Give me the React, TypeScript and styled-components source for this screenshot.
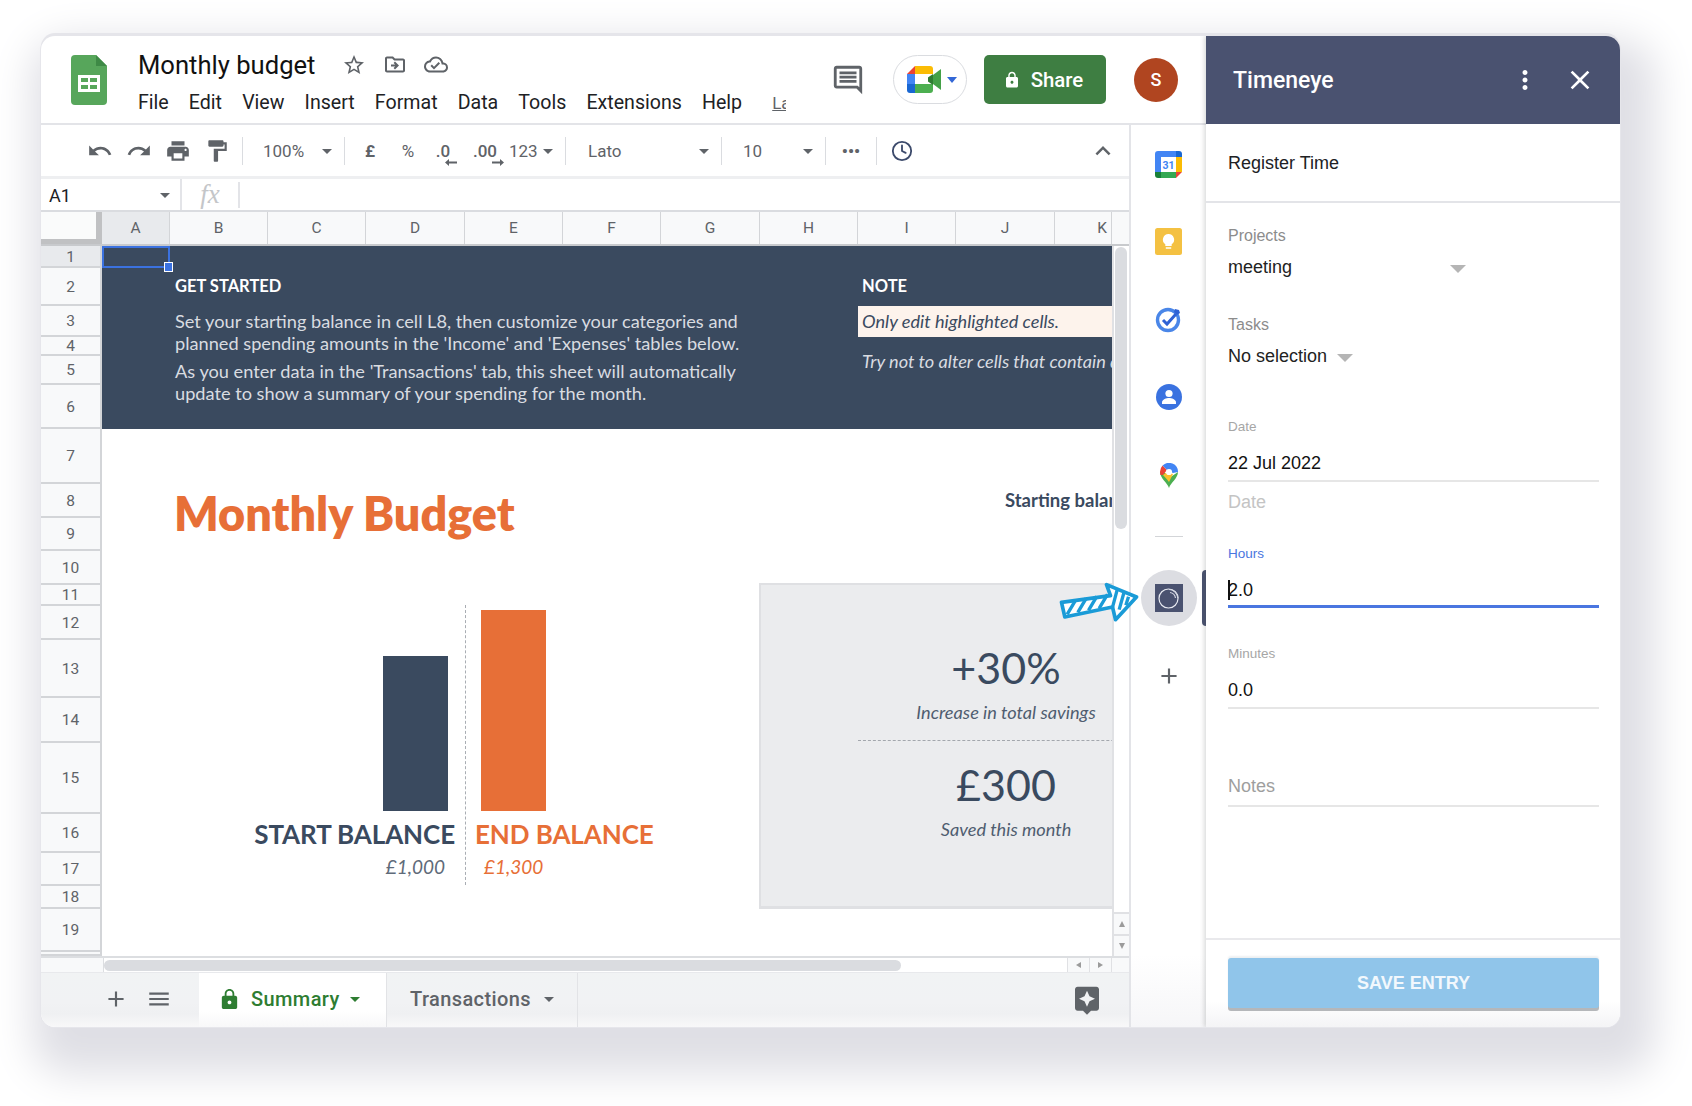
import React from 'react';
import styled, { createGlobalStyle } from 'styled-components';
import {
  MdUndo, MdRedo, MdPrint, MdFormatPaint, MdStarBorder, MdOutlineDriveFileMove, MdOutlineCloudDone,
  MdOutlineComment, MdLock, MdAdd, MdMenu, MdClose, MdMoreVert, MdExpandLess, MdAssistant,
} from 'react-icons/md';
import { Clock } from 'lucide-react';

const GlobalStyle = createGlobalStyle`
  html, body {
    margin: 0;
    height: 1106px;
    overflow: hidden;
    background: #fff;
  }
  * { box-sizing: border-box; }
`;

const ROW_HEIGHTS = [22, 38, 31, 19, 29, 44, 55, 34, 33, 34, 21, 34, 58, 45, 71, 39, 33, 23, 43, 4];
const COLUMNS: [string, number][] = [
  ['A', 68], ['B', 98], ['C', 98], ['D', 99], ['E', 98], ['F', 98], ['G', 99], ['H', 98], ['I', 98], ['J', 99], ['K', 57],
];
const MENU = ['File', 'Edit', 'View', 'Insert', 'Format', 'Data', 'Tools', 'Extensions', 'Help'];

const Page = styled.div`
  padding: 36px 0 0 41px;
`;

const Window = styled.div`
  width: 1579px;
  height: 991px;
  display: flex;
  border-radius: 14px;
  overflow: hidden;
  background: #fff;
  box-shadow: 0 -3px 0 0 #e5e5ea, 0 0 0 1px #e6e6eb, 13px 25px 40px 22px #dfdfe5;
  font-family: Roboto, sans-serif;
`;

const Workspace = styled.div`
  width: 1165px;
  display: flex;
  flex-direction: column;
`;

const TopBar = styled.div`
  height: 89px;
  display: flex;
  align-items: center;
  padding: 0 28px 0 30px;
  border-bottom: 2px solid #e3e4e8;
  flex-shrink: 0;
`;

const DocTitleBlock = styled.div`
  margin-left: 31px;
  display: flex;
  flex-direction: column;
  padding-top: 7px;
`;

const TitleRow = styled.div`
  height: 36px;
  display: flex;
  align-items: center;
  gap: 17px;
`;

const DocTitle = styled.span`
  font-size: 25.6px;
  color: #111;
  width: 176px;
  margin-right: 11px;
  white-space: nowrap;
`;

const TitleIcon = styled.span`
  width: 24px;
  height: 24px;
  display: flex;
  align-items: center;
  justify-content: center;
  color: #5f6368;
`;

const MenuRow = styled.div`
  margin-top: 3px;
  height: 34px;
  display: flex;
  align-items: center;
  gap: 20.1px;
`;

const MenuItem = styled.span`
  font-size: 19.6px;
  color: #202124;
`;

const LastEdit = styled.span`
  width: 14px;
  margin-left: 10px;
  overflow: hidden;
  white-space: nowrap;
  font-size: 17px;
  color: #5f6368;
  text-decoration: underline;
`;

const TopActions = styled.div`
  margin-left: auto;
  display: flex;
  align-items: center;
`;

const CommentButton = styled.span`
  display: flex;
  color: #5f6368;
  margin-right: 28px;
`;

const MeetPill = styled.div`
  width: 74px;
  height: 49px;
  border: 1.5px solid #dadce0;
  border-radius: 25px;
  display: flex;
  align-items: center;
  padding-left: 13px;
  gap: 6px;
  margin-right: 17px;
`;

const MeetCaret = styled.span`
  width: 0;
  height: 0;
  border-left: 5.5px solid transparent;
  border-right: 5.5px solid transparent;
  border-top: 6px solid #3367d6;
`;

const ShareButton = styled.div`
  width: 122px;
  height: 49px;
  border-radius: 5px;
  background: #3e7e42;
  color: #fff;
  font-size: 20.4px;
  font-weight: 500;
  display: flex;
  align-items: center;
  justify-content: center;
  gap: 10px;
  padding-right: 4px;
  margin-right: 28px;
`;

const Avatar = styled.div`
  width: 44px;
  height: 44px;
  border-radius: 50%;
  background: #b04520;
  color: #fff;
  font-size: 18px;
  font-weight: 500;
  display: flex;
  align-items: center;
  justify-content: center;
`;

const MainRow = styled.div`
  position: relative;
  flex: 1;
  display: flex;
  min-height: 0;
`;

const SheetArea = styled.div`
  width: 1088px;
  display: flex;
  flex-direction: column;
`;

const Toolbar = styled.div`
  height: 54px;
  display: flex;
  align-items: center;
  padding: 1px 0 0 39px;
  border-bottom: 3px solid #eeeff1;
  color: #5f6368;
  font-size: 17px;
  flex-shrink: 0;
`;

const ToolSlot = styled.span<{ $w: number }>`
  width: ${(p) => p.$w}px;
  display: flex;
  align-items: center;
  justify-content: center;
  color: #5f6368;
`;

const ToolSep = styled.span<{ $ml?: number }>`
  width: 1px;
  height: 28px;
  background: #dadce0;
  margin-left: ${(p) => p.$ml || 0}px;
`;

const ToolSelect = styled.span<{ $w: number; $pl: number }>`
  width: ${(p) => p.$w}px;
  padding: 0 12px 0 ${(p) => p.$pl}px;
  display: flex;
  align-items: center;
  justify-content: space-between;
  white-space: nowrap;
`;

const Caret = styled.span<{ $size?: number; $color?: string }>`
  width: 0;
  height: 0;
  flex-shrink: 0;
  border-left: ${(p) => p.$size || 5}px solid transparent;
  border-right: ${(p) => p.$size || 5}px solid transparent;
  border-top: ${(p) => p.$size || 5}px solid ${(p) => p.$color || '#5f6368'};
`;

const Decimal = styled.span`
  position: relative;
  font-weight: 500;
  font-size: 17px;
  line-height: 20px;
`;

const DecimalArrow = styled.svg`
  position: absolute;
  top: 18px;
  right: -7px;
  fill: #5f6368;
`;

const Collapse = styled.span`
  margin-left: auto;
  margin-right: 11px;
  display: flex;
  color: #5f6368;
`;

const FormulaBar = styled.div`
  height: 33px;
  display: flex;
  align-items: center;
  border-bottom: 2px solid #dadce0;
  flex-shrink: 0;
`;

const NameBox = styled.div`
  width: 141px;
  height: 100%;
  display: flex;
  align-items: center;
  justify-content: space-between;
  padding: 2px 10px 0 8px;
  border-right: 2px solid #e3e4e8;
  font-size: 18px;
  color: #202124;
`;

const FxLabel = styled.div`
  width: 58px;
  height: 26px;
  display: flex;
  align-items: center;
  justify-content: center;
  border-right: 2px solid #e3e4e8;
  font-family: 'Liberation Serif', serif;
  font-style: italic;
  font-size: 27px;
  color: #c4c6c9;
`;

const ColumnHeader = styled.div`
  height: 34px;
  display: flex;
  background: #f8f9fa;
  border-bottom: 2px solid #c8cacd;
  flex-shrink: 0;
`;

const CornerCell = styled.div`
  width: 61px;
  background: #fafbfb;
  border-right: 6px solid #c0c1c3;
  border-bottom: 5px solid #c0c1c3;
`;

const ColumnCell = styled.div<{ $w: number; $active?: boolean; $clipped?: boolean }>`
  width: ${(p) => p.$w}px;
  display: flex;
  align-items: center;
  justify-content: ${(p) => (p.$clipped ? 'flex-end' : 'center')};
  padding-right: ${(p) => (p.$clipped ? 4 : 0)}px;
  font-size: 15.5px;
  color: #5f6368;
  background: ${(p) => (p.$active ? '#e8eaed' : 'transparent')};
  border-right: 1.5px solid #d3d5d8;
`;

const GridRow = styled.div`
  height: 710px;
  display: flex;
  flex-shrink: 0;
`;

const RowHeaders = styled.div`
  width: 61px;
  display: flex;
  flex-direction: column;
  border-right: 2px solid #d3d5d8;
`;

const RowCell = styled.div<{ $h: number; $active?: boolean }>`
  height: ${(p) => p.$h}px;
  display: flex;
  align-items: center;
  justify-content: center;
  padding-top: 1px;
  font-size: 15.5px;
  color: #5f6368;
  background: ${(p) => (p.$active ? '#e8eaed' : '#f8f9fa')};
  border-bottom: 2px solid #d3d5d8;
`;

const Cells = styled.div`
  width: 1010px;
  display: flex;
  flex-direction: column;
  overflow: hidden;
  font-family: Lato, sans-serif;
`;

const Banner = styled.div`
  position: relative;
  height: 183px;
  display: grid;
  grid-template-columns: 756px 254px;
  background: #3a4a5f;
  flex-shrink: 0;
`;

const SelectedCell = styled.div`
  position: absolute;
  left: 0;
  top: 0;
  width: 68px;
  height: 22px;
  border: 2px solid #3b72e0;
`;

const SelectionHandle = styled.span`
  position: absolute;
  right: -5px;
  bottom: -6px;
  width: 9px;
  height: 10px;
  background: #3b72e0;
  border: 1px solid #fff;
`;

const BannerLeft = styled.div`
  padding: 29px 0 0 73px;
`;

const BannerHeading = styled.div`
  font-weight: 700;
  font-size: 16.5px;
  line-height: 22px;
  color: #fff;
`;

const BannerText = styled.p<{ $mt: number }>`
  margin: ${(p) => p.$mt}px 0 0;
  font-size: 18.2px;
  line-height: 22px;
  color: #d9dce1;
  white-space: nowrap;
`;

const BannerRight = styled.div`
  padding-top: 29px;
  overflow: hidden;
`;

const NoteHeading = styled(BannerHeading)`
  padding-left: 4px;
`;

const NoteHighlight = styled.div`
  margin-top: 9px;
  height: 31px;
  padding: 0 0 2px 4px;
  display: flex;
  align-items: center;
  background: #fdf3ec;
  font-style: italic;
  font-size: 18.2px;
  color: #3a4a5f;
`;

const NoteText = styled.div`
  margin-top: 13px;
  padding-left: 4px;
  font-style: italic;
  font-size: 18.2px;
  line-height: 22px;
  color: #d9dce1;
  white-space: nowrap;
`;

const Lower = styled.div`
  flex: 1;
  display: grid;
  grid-template-columns: 657px 353px;
  min-height: 0;
`;

const LowerLeft = styled.div`
  display: flex;
  flex-direction: column;
`;

const BudgetTitle = styled.h1`
  margin: 53px 0 0 72px;
  font-family: Lato, sans-serif;
  font-weight: 800;
  font-size: 46.7px;
  line-height: 62px;
  color: #e76f37;
  white-space: nowrap;
`;

const Chart = styled.div`
  margin-top: 61px;
  height: 280px;
  display: grid;
  grid-template-columns: 363px 1fr;
`;

const ChartColumn = styled.div<{ $right?: boolean }>`
  display: flex;
  flex-direction: column;
  justify-content: flex-end;
  align-items: ${(p) => (p.$right ? 'flex-start' : 'flex-end')};
  padding-bottom: 2px;
  ${(p) => (p.$right ? 'border-left: 1px dashed #a9adb3;' : '')}
`;

const Bar = styled.div<{ $h: number; $color: string; $right?: boolean }>`
  width: 65px;
  height: ${(p) => p.$h}px;
  background: ${(p) => p.$color};
  margin: ${(p) => (p.$right ? '0 0 0 15px' : '0 17px 0 0')};
`;

const BarLabel = styled.div<{ $color: string; $right?: boolean }>`
  margin: ${(p) => (p.$right ? '7px 0 0 9px' : '7px 10px 0 0')};
  font-weight: 700;
  font-size: 26px;
  line-height: 32px;
  letter-spacing: -0.1px;
  color: ${(p) => p.$color};
  white-space: nowrap;
`;

const BarAmount = styled.div<{ $color: string; $right?: boolean }>`
  margin: ${(p) => (p.$right ? '1px 0 0 18px' : '1px 20px 0 0')};
  font-style: italic;
  font-size: 19px;
  line-height: 32px;
  color: ${(p) => p.$color};
`;

const LowerRight = styled.div`
  display: flex;
  flex-direction: column;
  overflow: hidden;
`;

const StartingBalance = styled.div`
  margin: 60px 0 0 246px;
  font-weight: 700;
  font-size: 18.5px;
  line-height: 22px;
  color: #3a4a5f;
  white-space: nowrap;
`;

const StatCard = styled.div`
  margin-top: 72px;
  height: 326px;
  display: flex;
  flex-direction: column;
  background: #ebecee;
  border-left: 2px solid #dfe0e3;
  border-top: 2px solid #dfe0e3;
  border-bottom: 3px solid #dfe0e3;
`;

const StatBlock = styled.div<{ $h: number; $pt: number; $line?: boolean }>`
  height: ${(p) => p.$h}px;
  padding-top: ${(p) => p.$pt}px;
  margin-left: 97px;
  width: 296px;
  text-align: center;
  ${(p) => (p.$line ? 'border-bottom: 1px dashed #a3a7ad;' : '')}
`;

const StatValue = styled.div`
  font-size: 43px;
  line-height: 52px;
  color: #3a4a5f;
`;

const StatCaption = styled.div`
  margin-top: 6px;
  font-style: italic;
  font-size: 18.2px;
  line-height: 24px;
  color: #4f5d70;
`;

const VScroll = styled.div`
  width: 17px;
  display: flex;
  flex-direction: column;
  border-left: 2px solid #e0e1e4;
  padding: 1px 2px 0 1px;
`;

const VThumb = styled.div`
  height: 282px;
  border-radius: 6px;
  background: #dadce0;
`;

const ScrollButton = styled.div<{ $first?: boolean }>`
  height: 22px;
  margin: ${(p) => (p.$first ? 'auto -2px 0 -1px' : '0 -2px 0 -1px')};
  display: flex;
  align-items: center;
  justify-content: center;
  border-top: 2px solid #e0e1e4;
  background: #f8f9fa;
`;

const Triangle = styled.span<{ $dir: 'up' | 'down' | 'left' | 'right' }>`
  width: 0;
  height: 0;
  ${(p) => (p.$dir === 'up' ? 'border-left: 3.5px solid transparent; border-right: 3.5px solid transparent; border-bottom: 6px solid #9b9b9b;' : '')}
  ${(p) => (p.$dir === 'down' ? 'border-left: 3.5px solid transparent; border-right: 3.5px solid transparent; border-top: 6px solid #9b9b9b;' : '')}
  ${(p) => (p.$dir === 'left' ? 'border-top: 3.5px solid transparent; border-bottom: 3.5px solid transparent; border-right: 5px solid #9b9b9b;' : '')}
  ${(p) => (p.$dir === 'right' ? 'border-top: 3.5px solid transparent; border-bottom: 3.5px solid transparent; border-left: 5px solid #9b9b9b;' : '')}
`;

const HScroll = styled.div`
  height: 17px;
  display: flex;
  align-items: center;
  background: #fff;
  border-top: 2px solid #dcdee1;
  border-bottom: 1px solid #e8e9ec;
  flex-shrink: 0;
`;

const HCorner = styled.div`
  width: 63px;
  height: 100%;
  background: #f8f9fa;
  border-right: 1px solid #dcdee1;
`;

const HThumb = styled.div`
  width: 797px;
  height: 11px;
  border-radius: 6px;
  background: #dadce0;
`;

const HButton = styled.div<{ $first?: boolean }>`
  width: 22px;
  height: 100%;
  display: flex;
  align-items: center;
  justify-content: center;
  background: #f8f9fa;
  border-left: 1px solid #e0e1e4;
  margin-left: ${(p) => (p.$first ? 'auto' : '0')};
`;

const HEnd = styled.div`
  width: 18px;
  height: 100%;
  background: #f8f9fa;
  border-left: 1px solid #e0e1e4;
`;

const TabBar = styled.div`
  flex: 1;
  display: flex;
  align-items: stretch;
  padding-left: 61px;
  background: linear-gradient(#f1f3f4 0%, #f1f2f4 55%, #eff0f2 75%, #f8f8f9 100%);
`;

const TabIcon = styled.span<{ $mr: number }>`
  width: 28px;
  display: flex;
  align-items: center;
  justify-content: center;
  color: #5f6368;
  padding-bottom: 2px;
  margin-right: ${(p) => p.$mr}px;
`;

const SheetTab = styled.div<{ $active?: boolean; $w: number }>`
  width: ${(p) => p.$w}px;
  display: flex;
  align-items: center;
  padding: 0 0 2px ${(p) => (p.$active ? 19 : 23)}px;
  gap: ${(p) => (p.$active ? 10 : 13)}px;
  font-size: 20px;
  letter-spacing: 0.4px;
  font-weight: 500;
  color: ${(p) => (p.$active ? '#2e7d32' : '#5f6368')};
  background: ${(p) => (p.$active ? 'linear-gradient(#fff 70%, #f8f8f9)' : 'transparent')};
  border-right: 1px solid #e2e3e6;
`;

const ExploreButton = styled.span`
  margin-left: auto;
  margin-right: 26px;
  display: flex;
  align-items: center;
  color: #5f6368;
`;

const SidePanel = styled.div`
  position: relative;
  width: 77px;
  display: flex;
  flex-direction: column;
  align-items: center;
  border-left: 2px solid #e3e4e8;
  padding-top: 19px;
  background: linear-gradient(#fff 92%, #f6f6f8);
`;

const SideIcon = styled.div`
  width: 40px;
  height: 40px;
  margin-bottom: 37.75px;
  display: flex;
  align-items: center;
  justify-content: center;
`;

const SideDivider = styled.div`
  width: 28px;
  height: 1px;
  background: #d3d5d8;
  margin-top: 3px;
`;

const ActiveAddon = styled.div`
  margin-top: 33px;
  width: 56px;
  height: 56px;
  border-radius: 50%;
  background: #dcdde2;
  display: flex;
  align-items: center;
  justify-content: center;
`;

const ActiveMarker = styled.div`
  position: absolute;
  right: 0;
  top: 445px;
  width: 4px;
  height: 56px;
  border-radius: 4px 0 0 4px;
  background: #4a5270;
`;

const PlusButton = styled.div`
  margin-top: 37px;
  display: flex;
  color: #5f6368;
`;

const PointerArrow = styled.svg`
  position: absolute;
  left: 1016px;
  top: 457px;
`;

const AddonPanel = styled.div`
  width: 414px;
  display: flex;
  flex-direction: column;
  box-shadow: -2px 0 4px rgba(60, 64, 67, 0.18);
  z-index: 1;
  font-family: 'Liberation Sans', Arial, sans-serif;
`;

const PanelHeader = styled.div`
  height: 88px;
  display: flex;
  align-items: center;
  padding: 0 24px 0 27px;
  background: #4a5270;
  color: #fff;
  flex-shrink: 0;
`;

const PanelTitle = styled.span`
  flex: 1;
  font-family: Roboto, sans-serif;
  font-weight: 500;
  font-size: 23px;
`;

const PanelAction = styled.span<{ $mr?: number }>`
  display: flex;
  margin-right: ${(p) => p.$mr || 0}px;
`;

const RegisterRow = styled.div`
  height: 79px;
  display: flex;
  align-items: center;
  padding: 2px 0 0 22px;
  font-size: 18px;
  color: #202124;
  border-bottom: 2px solid #e3e4e8;
  flex-shrink: 0;
`;

const Form = styled.div`
  padding: 0 21px 0 22px;
`;

const SelectLabel = styled.div<{ $mt: number }>`
  margin-top: ${(p) => p.$mt}px;
  font-size: 16px;
  line-height: 22px;
  color: #8c8c8c;
`;

const SelectValue = styled.div<{ $wide?: boolean }>`
  margin-top: 8px;
  width: ${(p) => (p.$wide ? '238px' : 'auto')};
  display: flex;
  align-items: center;
  gap: 10px;
  font-size: 18px;
  line-height: 24px;
  color: #222;
`;

const SelectCaret = styled(Caret)<{ $push?: boolean }>`
  margin: 4px 0 0 ${(p) => (p.$push ? 'auto' : '0')};
`;

const SmallLabel = styled.div<{ $mt: number; $active?: boolean }>`
  margin-top: ${(p) => p.$mt}px;
  font-size: 13.5px;
  line-height: 18px;
  color: ${(p) => (p.$active ? '#4a76e0' : '#a6a6a6')};
`;

const InputLine = styled.div<{ $mt: number; $pb: number; $active?: boolean; $placeholder?: boolean }>`
  position: relative;
  margin-top: ${(p) => p.$mt}px;
  padding-bottom: ${(p) => p.$pb}px;
  font-size: 18px;
  line-height: 24px;
  color: ${(p) => (p.$placeholder ? '#9e9e9e' : '#111')};
  border-bottom: ${(p) => (p.$active ? '3px solid #4a76e0' : '2px solid #e6e6e6')};
`;

const Placeholder = styled.div`
  margin-top: 8px;
  font-size: 18px;
  line-height: 24px;
  color: #c4c4c4;
`;

const TextCursor = styled.span`
  position: absolute;
  left: 0;
  top: 2px;
  width: 1.5px;
  height: 20px;
  background: #111;
`;

const PanelFooter = styled.div`
  margin-top: auto;
  height: 89px;
  padding: 18px 21px 0 22px;
  border-top: 2px solid #e9e9ec;
  background: linear-gradient(#fff 70%, #f4f4f6);
`;

const SaveButton = styled.div`
  height: 50px;
  display: flex;
  align-items: center;
  justify-content: center;
  border-radius: 3px;
  background: #90c5ea;
  box-shadow: 0 3px 0 #b5b7ba, 0 -2px 2px #eef0f2;
  color: #f2f8fd;
  font-weight: 700;
  font-size: 18px;
`;

const SheetsLogo = () => (
  <svg width="36" height="50" viewBox="0 0 36 50">
    <path d="M4 0h21l11 11v35a4 4 0 0 1-4 4H4a4 4 0 0 1-4-4V4a4 4 0 0 1 4-4z" fill="#57a65b" />
    <path d="M25 0l11 11H25z" fill="#3e8a46" />
    <path d="M7 20h22v17H7z" fill="#fff" />
    <path d="M10 23h7v4h-7zM19 23h7v4h-7zM10 30h7v4h-7zM19 30h7v4h-7z" fill="#57a65b" />
  </svg>
);

const MeetLogo = () => (
  <svg width="34" height="27" viewBox="0 0 34 27">
    <path d="M0 8L8 0v8z" fill="#ea4335" />
    <path d="M8 0h15a3 3 0 0 1 3 3v5H8z" fill="#fbbc04" />
    <path d="M0 8h8v10H0z" fill="#4285f4" />
    <path d="M0 18h8v9H3a3 3 0 0 1-3-3z" fill="#1967d2" />
    <path d="M8 18h18v6a3 3 0 0 1-3 3H8z" fill="#4caf50" />
    <path d="M26 9l8-6v21l-8-6z" fill="#43a047" />
    <path d="M18 13.5L26 8v11z" fill="#2e7d32" />
    <path d="M8 8h13v10H8z" fill="#fff" />
  </svg>
);

const CalendarIcon = () => (
  <svg width="27" height="27" viewBox="0 0 27 27">
    <path d="M3 0h18v6H6v15H0V3a3 3 0 0 1 3-3z" fill="#4285f4" />
    <path d="M21 0h3a3 3 0 0 1 3 3v3h-6z" fill="#1967d2" />
    <path d="M21 6h6v15h-6z" fill="#fbbc04" />
    <path d="M6 21h15v6H6z" fill="#34a853" />
    <path d="M0 21h6v6H3a3 3 0 0 1-3-3z" fill="#188038" />
    <path d="M21 21h6l-6 6z" fill="#ea4335" />
    <path d="M6 6h15v15H6z" fill="#fff" />
    <text x="13.5" y="18" textAnchor="middle" fontFamily="Roboto, sans-serif" fontSize="10.5" fontWeight="700" fill="#4285f4">31</text>
  </svg>
);

const KeepIcon = () => (
  <svg width="27" height="27" viewBox="0 0 27 27">
    <rect width="27" height="27" rx="2.5" fill="#f4c142" />
    <path d="M13.5 6a5.6 5.6 0 0 0-3.2 10.2V18h6.4v-1.8A5.6 5.6 0 0 0 13.5 6z" fill="#fff" />
    <path d="M10.8 19.2h5.4v1.6h-5.4z" fill="#fff" />
  </svg>
);

const TasksIcon = () => (
  <svg width="27" height="27" viewBox="0 0 27 27">
    <circle cx="13" cy="14" r="10.5" fill="none" stroke="#4a86e8" strokeWidth="3.4" />
    <path d="M8 14l4 4 9-10" fill="none" stroke="#2f62d5" strokeWidth="3" />
    <path d="M20 3l4 1 1 3-3 2-3-3z" fill="#2f62d5" />
  </svg>
);

const ContactsIcon = () => (
  <svg width="26" height="26" viewBox="0 0 26 26">
    <circle cx="13" cy="13" r="13" fill="#3a72e0" />
    <circle cx="13" cy="9.5" r="3.6" fill="#fff" />
    <path d="M6 18.5c0-3 4.5-4.4 7-4.4s7 1.4 7 4.4V20H6z" fill="#fff" />
  </svg>
);

const MapsIcon = () => (
  <svg width="18" height="25" viewBox="0 0 18 25">
    <path d="M9 25C7.5 20 0 15 0 9l5 1 4 5 9-6c0 6-7.500 11-9 16z" fill="#4caf50" />
    <path d="M0 9a9 9 0 0 1 2.600-6.400L7 7 3 12 .5 12z" fill="#ea4335" />
    <path d="M2.600 2.600A9 9 0 0 1 18 9l-5 1-6-3z" fill="#4285f4" />
    <path d="M3 12l4-3 6 2-4 8c-1.500-2.500-4-4.500-6-7z" fill="#fbc02d" />
    <circle cx="9" cy="9" r="3.100" fill="#fff" />
  </svg>
);

const TimeneyeIcon = () => (
  <svg width="28" height="28" viewBox="0 0 28 28">
    <rect width="28" height="28" fill="#4a5270" />
    <circle cx="13.500" cy="14.500" r="9.500" fill="none" stroke="#e9ebf2" strokeWidth="1.200" />
    <path d="M14 5.500a9 9 0 0 1 9 8.500" fill="none" stroke="#d4d7e2" strokeWidth="1.200" />
    <path d="M15 8.500a6.500 6.500 0 0 1 5.500 5.500" fill="none" stroke="#d4d7e2" strokeWidth="1.200" />
  </svg>
);

const App: React.FC = () => {
  return (
    <Page>
      <GlobalStyle />
      <Window>
        <Workspace>
          <TopBar>
            <SheetsLogo />
            <DocTitleBlock>
              <TitleRow>
                <DocTitle>Monthly budget</DocTitle>
                <TitleIcon><MdStarBorder size={26} /></TitleIcon>
                <TitleIcon><MdOutlineDriveFileMove size={25} /></TitleIcon>
                <TitleIcon><MdOutlineCloudDone size={25} /></TitleIcon>
              </TitleRow>
              <MenuRow>
                {MENU.map((item) => (
                  <MenuItem key={item}>{item}</MenuItem>
                ))}
                <LastEdit>Last edit was seconds ago</LastEdit>
              </MenuRow>
            </DocTitleBlock>
            <TopActions>
              <CommentButton><MdOutlineComment size={34} /></CommentButton>
              <MeetPill>
                <MeetLogo />
                <MeetCaret />
              </MeetPill>
              <ShareButton>
                <MdLock size={18} />
                Share
              </ShareButton>
              <Avatar>S</Avatar>
            </TopActions>
          </TopBar>
          <MainRow>
            <SheetArea>
              <Toolbar>
                <ToolSlot $w={39}><MdUndo size={26} /></ToolSlot>
                <ToolSlot $w={39}><MdRedo size={26} /></ToolSlot>
                <ToolSlot $w={39}><MdPrint size={26} /></ToolSlot>
                <ToolSlot $w={39}><MdFormatPaint size={26} /></ToolSlot>
                <ToolSep $ml={6} />
                <ToolSelect $w={101} $pl={20}>100% <Caret /></ToolSelect>
                <ToolSep />
                <ToolSlot $w={50}><strong>£</strong></ToolSlot>
                <ToolSlot $w={26}>%</ToolSlot>
                <ToolSlot $w={44}>
                  <Decimal>
                    .0
                    <DecimalArrow width="12" height="7" viewBox="0 0 12 7"><path d="M0 3.500L4 0v2.500h8v2H4V7z" /></DecimalArrow>
                  </Decimal>
                </ToolSlot>
                <ToolSlot $w={40}>
                  <Decimal>
                    .00
                    <DecimalArrow width="12" height="7" viewBox="0 0 12 7"><path d="M12 3.500L8 0v2.500H0v2h8V7z" /></DecimalArrow>
                  </Decimal>
                </ToolSlot>
                <ToolSelect $w={60} $pl={4}>123 <Caret /></ToolSelect>
                <ToolSep />
                <ToolSelect $w={155} $pl={22}>Lato <Caret /></ToolSelect>
                <ToolSep />
                <ToolSelect $w={103} $pl={21}>10 <Caret /></ToolSelect>
                <ToolSep />
                <ToolSlot $w={50}><strong>•••</strong></ToolSlot>
                <ToolSep />
                <ToolSlot $w={49}><Clock size={22} color="#3c4a6b" /></ToolSlot>
                <Collapse><MdExpandLess size={30} /></Collapse>
              </Toolbar>
              <FormulaBar>
                <NameBox>A1 <Caret /></NameBox>
                <FxLabel>fx</FxLabel>
              </FormulaBar>
              <ColumnHeader>
                <CornerCell />
                {COLUMNS.map(([name, width], i) => (
                  <ColumnCell key={name} $w={width} $active={i === 0} $clipped={name === 'K'}>{name}</ColumnCell>
                ))}
              </ColumnHeader>
              <GridRow>
                <RowHeaders>
                  {ROW_HEIGHTS.map((h, i) => (
                    <RowCell key={i} $h={h} $active={i === 0}>{h > 10 ? i + 1 : ''}</RowCell>
                  ))}
                </RowHeaders>
                <Cells>
                  <Banner>
                    <SelectedCell><SelectionHandle /></SelectedCell>
                    <BannerLeft>
                      <BannerHeading>GET STARTED</BannerHeading>
                      <BannerText $mt={13}>
                        Set your starting balance in cell L8, then customize your categories and<br />
                        planned spending amounts in the 'Income' and 'Expenses' tables below.
                      </BannerText>
                      <BannerText $mt={6}>
                        As you enter data in the 'Transactions' tab, this sheet will automatically<br />
                        update to show a summary of your spending for the month.
                      </BannerText>
                    </BannerLeft>
                    <BannerRight>
                      <NoteHeading>NOTE</NoteHeading>
                      <NoteHighlight>Only edit highlighted cells.</NoteHighlight>
                      <NoteText>Try not to alter cells that contain data.</NoteText>
                    </BannerRight>
                  </Banner>
                  <Lower>
                    <LowerLeft>
                      <BudgetTitle>Monthly Budget</BudgetTitle>
                      <Chart>
                        <ChartColumn>
                          <Bar $h={155} $color="#3a4a5f" />
                          <BarLabel $color="#3a4a5f">START BALANCE</BarLabel>
                          <BarAmount $color="#5f6b7a">£1,000</BarAmount>
                        </ChartColumn>
                        <ChartColumn $right>
                          <Bar $h={201} $color="#e76f37" $right />
                          <BarLabel $color="#e76f37" $right>END BALANCE</BarLabel>
                          <BarAmount $color="#e76f37" $right>£1,300</BarAmount>
                        </ChartColumn>
                      </Chart>
                    </LowerLeft>
                    <LowerRight>
                      <StartingBalance>Starting balance</StartingBalance>
                      <StatCard>
                        <StatBlock $h={156} $pt={57} $line>
                          <StatValue>+30%</StatValue>
                          <StatCaption>Increase in total savings</StatCaption>
                        </StatBlock>
                        <StatBlock $h={165} $pt={18}>
                          <StatValue>£300</StatValue>
                          <StatCaption>Saved this month</StatCaption>
                        </StatBlock>
                      </StatCard>
                    </LowerRight>
                  </Lower>
                </Cells>
                <VScroll>
                  <VThumb />
                  <ScrollButton $first><Triangle $dir="up" /></ScrollButton>
                  <ScrollButton><Triangle $dir="down" /></ScrollButton>
                </VScroll>
              </GridRow>
              <HScroll>
                <HCorner />
                <HThumb />
                <HButton $first><Triangle $dir="left" /></HButton>
                <HButton><Triangle $dir="right" /></HButton>
                <HEnd />
              </HScroll>
              <TabBar>
                <TabIcon $mr={15}><MdAdd size={26} /></TabIcon>
                <TabIcon $mr={26}><MdMenu size={26} /></TabIcon>
                <SheetTab $active $w={188}>
                  <MdLock size={23} />
                  Summary
                  <Caret $color="#2e7d32" />
                </SheetTab>
                <SheetTab $w={191}>
                  Transactions
                  <Caret />
                </SheetTab>
                <ExploreButton><MdAssistant size={32} /></ExploreButton>
              </TabBar>
            </SheetArea>
            <SidePanel>
              <SideIcon><CalendarIcon /></SideIcon>
              <SideIcon><KeepIcon /></SideIcon>
              <SideIcon><TasksIcon /></SideIcon>
              <SideIcon><ContactsIcon /></SideIcon>
              <SideIcon><MapsIcon /></SideIcon>
              <SideDivider />
              <ActiveAddon><TimeneyeIcon /></ActiveAddon>
              <PlusButton><MdAdd size={26} /></PlusButton>
              <ActiveMarker />
            </SidePanel>
            <PointerArrow width="82" height="40" viewBox="170 545 245 120">
              <path d="M183 606l147-20-12-33 90 37-63 68-9-38-143 30z" fill="#fff" stroke="#1a9bd7" strokeWidth="11" strokeLinejoin="round" />
              <path d="M200 642l25-42M232 636l25-42M264 630l25-42M296 624l25-42M335 625l16-60M356 628l14-50M376 615l8-26" stroke="#1a9bd7" strokeWidth="10" fill="none" />
            </PointerArrow>
          </MainRow>
        </Workspace>
        <AddonPanel>
          <PanelHeader>
            <PanelTitle>Timeneye</PanelTitle>
            <PanelAction $mr={24}><MdMoreVert size={30} /></PanelAction>
            <PanelAction><MdClose size={32} /></PanelAction>
          </PanelHeader>
          <RegisterRow>Register Time</RegisterRow>
          <Form>
            <SelectLabel $mt={22}>Projects</SelectLabel>
            <SelectValue $wide>
              meeting
              <SelectCaret $size={8} $color="#b5b5b5" $push />
            </SelectValue>
            <SelectLabel $mt={35}>Tasks</SelectLabel>
            <SelectValue>
              No selection
              <SelectCaret $size={8} $color="#b5b5b5" />
            </SelectValue>
            <SmallLabel $mt={50}>Date</SmallLabel>
            <InputLine $mt={15} $pb={5}>22 Jul 2022</InputLine>
            <Placeholder>Date</Placeholder>
            <SmallLabel $mt={31} $active>Hours</SmallLabel>
            <InputLine $mt={15} $pb={3} $active><TextCursor />2.0</InputLine>
            <SmallLabel $mt={37}>Minutes</SmallLabel>
            <InputLine $mt={15} $pb={5}>0.0</InputLine>
            <InputLine $mt={65} $pb={7} $placeholder>Notes</InputLine>
          </Form>
          <PanelFooter>
            <SaveButton>SAVE ENTRY</SaveButton>
          </PanelFooter>
        </AddonPanel>
      </Window>
    </Page>
  );
};

export default App;
